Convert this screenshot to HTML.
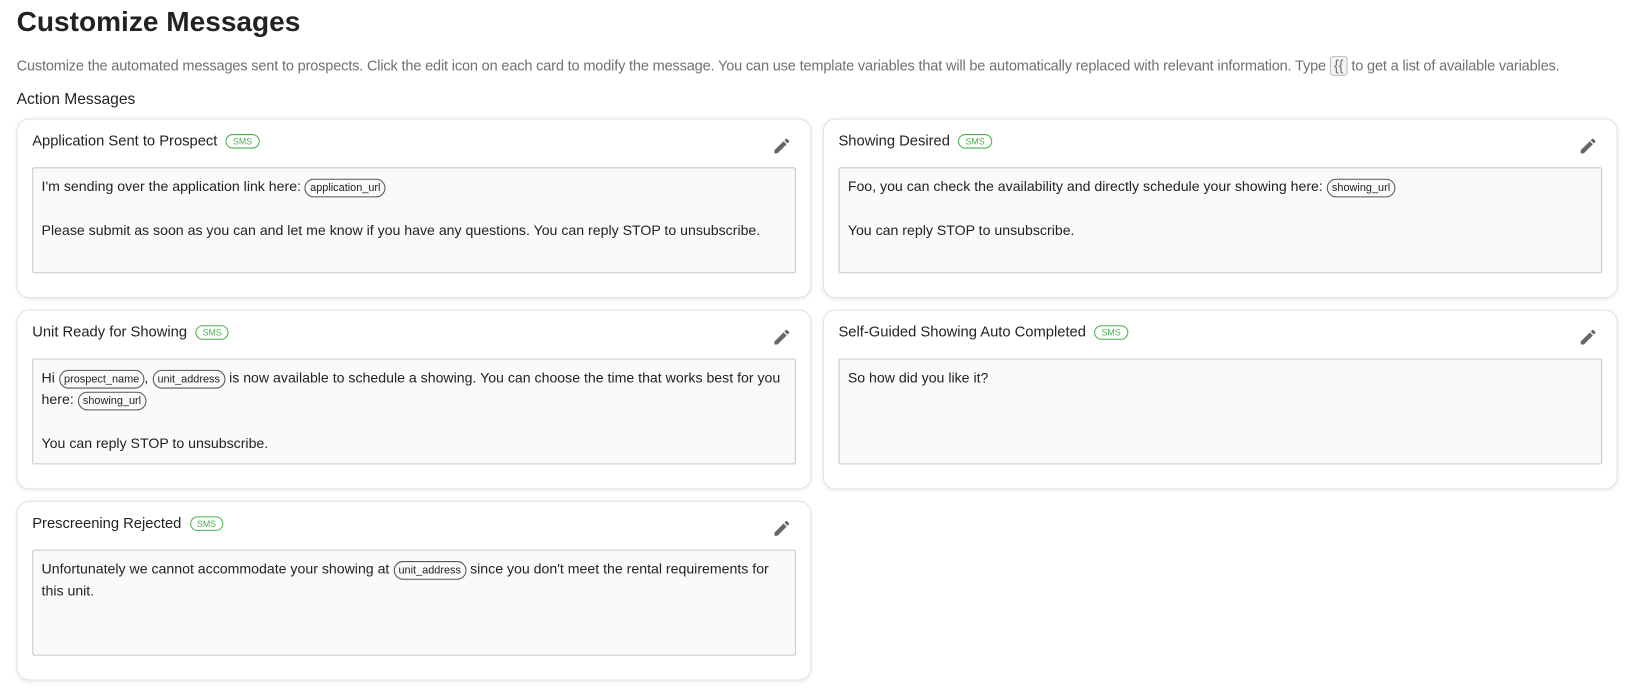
<!DOCTYPE html>
<html><head><style>
body{margin:0;background:#fff;font-family:"Liberation Sans",sans-serif;color:#222;width:1629px;height:693px;overflow:hidden;position:relative}
#w{position:absolute;left:0;top:0;width:1568px;height:667px;transform:scale(1.039);transform-origin:0 0}
h1{position:absolute;left:16px;top:6px;margin:0;font-size:27px;font-weight:bold;color:#222}
.desc{position:absolute;left:16px;top:54px;font-size:14px;color:#707070;white-space:nowrap;letter-spacing:-0.16px}
.kbd{display:inline-block;border:1px solid #bbb;border-radius:3px;padding:0 3px;background:#f4f4f4;line-height:17px}
.sec{position:absolute;left:16px;top:87px;font-size:15px;color:#222}
.card{position:absolute;width:763px;height:171px;border:1px solid #e2e2e2;border-radius:12px;box-shadow:0 1px 4px rgba(0,0,0,.08);background:#fff}
.title{position:absolute;left:14px;top:13px;font-size:14.2px;color:#222}
.sms{display:inline-block;margin-left:8px;border:1px solid #4caf50;color:#4caf50;border-radius:9px;font-size:8.5px;padding:1px 6px;vertical-align:1px}
.pen{position:absolute;right:18px;top:16px}
.box{position:absolute;left:14px;top:46px;width:717px;height:86px;border:1px solid #c8c8c8;border-radius:2px;background:#fafafa;padding:7px 8px;font-size:13.6px;line-height:21px;color:#222}
.v{display:inline-block;border:1px solid #555;border-radius:10px;font-size:10.5px;padding:0 4px;line-height:16px}
</style></head><body><div id="w">
<h1>Customize Messages</h1>
<div class="desc">Customize the automated messages sent to prospects. Click the edit icon on each card to modify the message. You can use template variables that will be automatically replaced with relevant information. Type <span class="kbd">{{</span> to get a list of available variables.</div>
<div class="sec">Action Messages</div>

<div class="card" style="left:16px;top:114px">
<div class="title">Application Sent to Prospect<span class="sms">SMS</span></div>
<svg class="pen" width="19" height="19" viewBox="0 0 24 24"><path fill="#666" d="M3 17.25V21h3.75L17.81 9.94l-3.75-3.75L3 17.25zM20.71 7.04a1 1 0 000-1.41l-2.34-2.34a1 1 0 00-1.41 0l-1.83 1.830 3.75 3.75 1.83-1.83z"/></svg>
<div class="box">I'm sending over the application link here: <span class="v">application_url</span><br><br>Please submit as soon as you can and let me know if you have any questions. You can reply STOP to unsubscribe.</div>
</div>

<div class="card" style="left:792px;top:114px">
<div class="title">Showing Desired<span class="sms">SMS</span></div>
<svg class="pen" width="19" height="19" viewBox="0 0 24 24"><path fill="#666" d="M3 17.25V21h3.75L17.81 9.94l-3.75-3.75L3 17.25zM20.71 7.04a1 1 0 000-1.41l-2.34-2.34a1 1 0 00-1.41 0l-1.83 1.83 3.75 3.75 1.83-1.83z"/></svg>
<div class="box">Foo, you can check the availability and directly schedule your showing here: <span class="v">showing_url</span><br><br>You can reply STOP to unsubscribe.</div>
</div>

<div class="card" style="left:16px;top:298px">
<div class="title">Unit Ready for Showing<span class="sms">SMS</span></div>
<svg class="pen" width="19" height="19" viewBox="0 0 24 24"><path fill="#666" d="M3 17.25V21h3.75L17.81 9.94l-3.75-3.75L3 17.25zM20.71 7.04a1 1 0 000-1.41l-2.34-2.34a1 1 0 00-1.41 0l-1.83 1.83 3.75 3.75 1.83-1.83z"/></svg>
<div class="box">Hi <span class="v">prospect_name</span>, <span class="v">unit_address</span> is now available to schedule a showing. You can choose the time that works best for you here: <span class="v">showing_url</span><br><br>You can reply STOP to unsubscribe.</div>
</div>

<div class="card" style="left:792px;top:298px">
<div class="title">Self-Guided Showing Auto Completed<span class="sms">SMS</span></div>
<svg class="pen" width="19" height="19" viewBox="0 0 24 24"><path fill="#666" d="M3 17.25V21h3.75L17.81 9.94l-3.75-3.75L3 17.25zM20.71 7.04a1 1 0 000-1.41l-2.34-2.34a1 1 0 00-1.41 0l-1.83 1.83 3.75 3.75 1.83-1.83z"/></svg>
<div class="box">So how did you like it?</div>
</div>

<div class="card" style="left:16px;top:482px">
<div class="title">Prescreening Rejected<span class="sms">SMS</span></div>
<svg class="pen" width="19" height="19" viewBox="0 0 24 24"><path fill="#666" d="M3 17.25V21h3.75L17.81 9.94l-3.75-3.75L3 17.25zM20.71 7.04a1 1 0 000-1.41l-2.34-2.34a1 1 0 00-1.41 0l-1.83 1.83 3.75 3.75 1.83-1.83z"/></svg>
<div class="box">Unfortunately we cannot accommodate your showing at <span class="v">unit_address</span> since you don't meet the rental requirements for this unit.</div>
</div>
</div></body></html>
